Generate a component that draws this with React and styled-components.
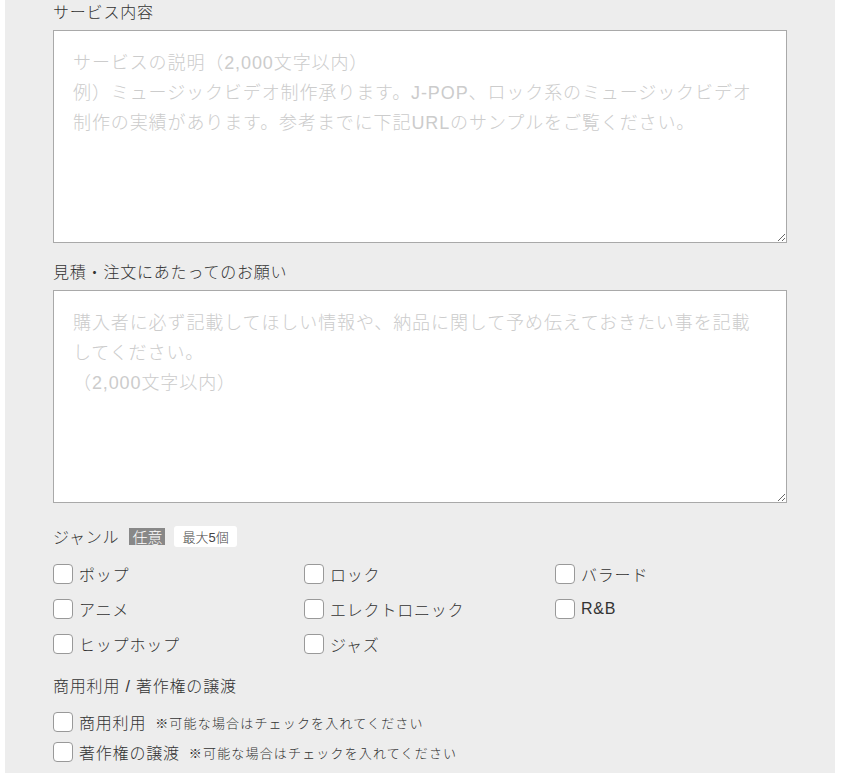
import React from "react";
import styled, { createGlobalStyle } from "styled-components";

const Global = createGlobalStyle`
  html, body { margin: 0; padding: 0; background: #ffffff; }
  body {
    font-family: "Liberation Sans", "Noto Sans CJK JP", sans-serif;
    font-weight: 300;
    color: #333333;
  }
  * { box-sizing: border-box; }
`;

const Panel = styled.div`
  margin-left: 5px;
  width: 830px;
  min-height: 773px;
  background: #ededed;
  padding: 1px 0 0 48px;
`;

const Section = styled.section`
  margin-bottom: ${(p) => p.$mb || 18}px;
`;

const Label = styled.div`
  font-size: 16px;
  line-height: 24px;
  letter-spacing: 0.05em;
  color: #333;
  margin-bottom: ${(p) => p.$mb ?? 5}px;
`;

const TextArea = styled.textarea`
  display: block;
  width: 734px;
  height: 213px;
  padding: 17px 19px;
  border: 1px solid #a9a9a9;
  border-radius: 0;
  background: #fff;
  font-family: "Liberation Sans", "Noto Sans CJK JP", sans-serif;
  font-weight: 300;
  font-size: 18px;
  line-height: 30px;
  letter-spacing: 0.05em;
  color: #333;
  resize: vertical;
  outline: none;
  &::placeholder {
    color: #cccccc;
  }
`;

const HeaderRow = styled.div`
  display: flex;
  align-items: center;
  height: 28px;
  margin-bottom: 6px;
`;

const HeaderText = styled.span`
  font-size: 16px;
  letter-spacing: 0.05em;
  margin-right: 10px;
`;

const OptionalBadge = styled.span`
  display: inline-flex;
  align-items: center;
  justify-content: center;
  background: #888888;
  color: #ffffff;
  font-size: 15px;
  height: 17px;
  width: 36px;
  margin-right: 9px;
`;

const MaxBadge = styled.span`
  display: inline-flex;
  align-items: center;
  justify-content: center;
  background: #ffffff;
  color: #444;
  font-size: 13px;
  height: 21px;
  padding: 0 8px;
  border-radius: 3px;
`;

const Grid = styled.div`
  display: grid;
  grid-template-columns: repeat(3, 251px);
  grid-auto-rows: 35px;
`;

const Item = styled.label`
  display: flex;
  align-items: center;
  height: ${(p) => p.$h || 35}px;
  font-size: 16px;
  letter-spacing: 0.05em;
  color: #333;
`;

const Box = styled.span`
  display: inline-block;
  width: 20px;
  height: 20px;
  flex: none;
  background: #fff;
  border: 1px solid #999;
  border-radius: 4px;
  margin-right: 6px;
`;

const Note = styled.span`
  font-size: 13px;
  letter-spacing: 0.09em;
  margin-left: 9px;
  color: #333;
`;

const genres = [
  "ポップ",
  "ロック",
  "バラード",
  "アニメ",
  "エレクトロニック",
  "R&B",
  "ヒップホップ",
  "ジャズ",
];

export default function App() {
  return (
    <>
      <Global />
      <Panel>
        <Section>
          <Label>サービス内容</Label>
          <TextArea
            placeholder={
              "サービスの説明（2,000文字以内）\n例）ミュージックビデオ制作承ります。J-POP、ロック系のミュージックビデオ制作の実績があります。参考までに下記URLのサンプルをご覧ください。"
            }
          />
        </Section>
        <Section $mb={19}>
          <Label>見積・注文にあたってのお願い</Label>
          <TextArea
            placeholder={
              "購入者に必ず記載してほしい情報や、納品に関して予め伝えておきたい事を記載してください。\n（2,000文字以内）"
            }
          />
        </Section>
        <Section $mb={14}>
          <HeaderRow>
            <HeaderText>ジャンル</HeaderText>
            <OptionalBadge>任意</OptionalBadge>
            <MaxBadge>最大5個</MaxBadge>
          </HeaderRow>
          <Grid>
            {genres.map((g) => (
              <Item key={g}>
                <Box />
                {g}
              </Item>
            ))}
          </Grid>
        </Section>
        <Section>
          <Label $mb={8}>商用利用 / 著作権の譲渡</Label>
          <Item $h={30}>
            <Box />
            商用利用
            <Note>※可能な場合はチェックを入れてください</Note>
          </Item>
          <Item $h={30}>
            <Box />
            著作権の譲渡
            <Note>※可能な場合はチェックを入れてください</Note>
          </Item>
        </Section>
      </Panel>
    </>
  );
}
